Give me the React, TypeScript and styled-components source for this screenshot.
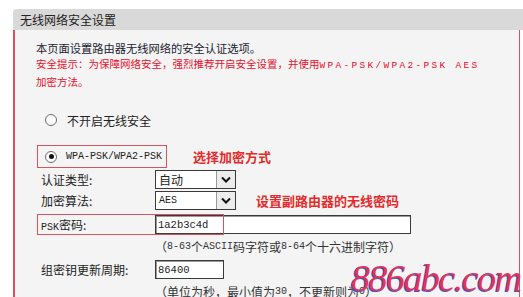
import React from "react";
import styled, { createGlobalStyle } from "styled-components";

const borderRed = "#d8535d";
const noteRed = "#e8112d";

const GlobalStyle = createGlobalStyle`
  html, body {
    margin: 0;
    padding: 0;
    background: #fff;
  }

  body {
    font-family: "Noto Sans CJK SC", "Noto Sans", sans-serif;
    font-size: 12px;
    color: #222;
    overflow: hidden;
  }
`;

const Page = styled.div`
  position: relative;
  box-sizing: border-box;
  width: 523px;
  height: 297px;
  padding: 9px 0 0 13px;
  overflow: hidden;
`;

const Panel = styled.div`
  display: flex;
  flex-direction: column;
`;

const Header = styled.div`
  display: flex;
  align-items: center;

  height: 21px;
  padding-left: 7px;

  background: #d9d9d9;
  border-top-left-radius: 4px;

  font-size: 12px;
  color: #222;
`;

const Body = styled.div`
  display: flex;
  flex-direction: column;

  height: 300px;
  margin-right: 3px;
  padding: 10px 0 0 21px;

  background: #f4f4f4;
  border-left: 2px solid ${borderRed};
  border-right: 1px solid ${borderRed};
`;

const Intro = styled.div`
  line-height: 16px;
  font-size: 11.25px;
  color: #1c1c30;
  white-space: nowrap;
`;

const Warning = styled.div`
  line-height: 16px;
  font-size: 10.5px;
  color: ${noteRed};
  white-space: nowrap;
`;

const Mono = styled.span<{ $size?: number; $spacing?: number }>`
  font-family: "Liberation Mono", monospace;
  font-size: ${(p) => p.$size ?? 10}px;
  letter-spacing: ${(p) => p.$spacing ?? 0}px;
`;

const RadioRow = styled.div`
  display: flex;
  align-items: center;
  gap: 10px;

  height: 20px;
  margin-top: 20px;
  padding-left: 9px;
`;

const Radio = styled.span<{ $checked?: boolean }>`
  position: relative;
  box-sizing: border-box;
  width: 12px;
  height: 12px;

  background: #fff;
  border: 1px solid #6a6a6a;
  border-radius: 50%;

  &::after {
    content: "";
    display: ${(p) => (p.$checked ? "block" : "none")};
    position: absolute;
    left: 2.5px;
    top: 2.5px;
    width: 5px;
    height: 5px;
    border-radius: 50%;
    background: #111;
  }
`;

const WpaRow = styled.div`
  display: flex;
  align-items: center;
  margin-top: 15px;
`;

const WpaBox = styled.div`
  display: flex;
  align-items: center;
  gap: 9px;

  box-sizing: border-box;
  height: 23px;
  margin-left: 1px;
  padding: 0 4px 0 7px;

  border: 1px solid ${borderRed};
`;

const Annotation = styled.span<{ $gap: number }>`
  margin-left: ${(p) => p.$gap}px;
  font-size: 13px;
  font-weight: 700;
  color: #e52b2b;
  white-space: nowrap;
`;

const FormRow = styled.div<{ $top: number }>`
  position: relative;
  display: flex;
  align-items: center;

  height: 21px;
  margin-top: ${(p) => p.$top}px;
  padding-left: 5px;
`;

const Label = styled.span`
  width: 114px;
  font-size: 12px;
  color: #222;
`;

const Hint = styled.div<{ $top: number }>`
  display: flex;
  align-items: center;

  height: 20px;
  margin-top: ${(p) => p.$top}px;
  padding-left: 119px;

  font-size: 12px;
  color: #333;
  white-space: nowrap;
`;

const SelectBox = styled.div`
  display: flex;
  align-items: stretch;

  box-sizing: border-box;
  width: 81px;
  height: 19px;

  background: #fff;
  border: 1px solid #3a3a3a;
`;

const SelectText = styled.span`
  flex: 1;
  display: flex;
  align-items: center;
  padding-left: 3px;
  font-size: 12px;
  color: #222;
`;

const SelectButton = styled.span`
  display: flex;
  align-items: center;
  justify-content: center;

  width: 18px;

  background: #ececec;
  border-left: 1px solid #9a9a9a;
`;

const TextInput = styled.div<{ $width: number }>`
  display: flex;
  align-items: center;

  box-sizing: border-box;
  width: ${(p) => p.$width}px;
  height: 19px;
  padding-left: 2px;

  background: #fff;
  border: 1px solid #3a3a3a;
  box-shadow: inset 1px 1px 0 #9a9a9a;
  color: #222;
`;

const Highlight = styled.div`
  position: absolute;
  left: 1px;
  top: 0;

  box-sizing: border-box;
  width: 187px;
  height: 21px;

  border: 1px solid ${borderRed};
  pointer-events: none;
`;

const Watermark = styled.div`
  position: absolute;
  left: 351px;
  top: 259px;

  font-family: "Liberation Serif", serif;
  font-style: italic;
  font-size: 38px;
  line-height: 1;
  letter-spacing: -1.5px;
  color: #e2345a;
  text-shadow: -1px 1px 0 #3f58c8;
  white-space: nowrap;
`;

const Chevron = () => (
  <svg width="10" height="7" viewBox="0 0 10 7">
    <path d="M1 1.5 L5 5.5 L9 1.5" fill="none" stroke="#111" strokeWidth="2" />
  </svg>
);

const Select: React.FC<{ children: React.ReactNode }> = ({ children }) => (
  <SelectBox>
    <SelectText>{children}</SelectText>
    <SelectButton>
      <Chevron />
    </SelectButton>
  </SelectBox>
);

export default function App() {
  return (
    <Page>
      <GlobalStyle />
      <Panel>
        <Header>无线网络安全设置</Header>
        <Body>
          <Intro>本页面设置路由器无线网络的安全认证选项。</Intro>
          <Warning>
            安全提示：为保障网络安全，强烈推荐开启安全设置，并使用
            <Mono $size={9.5} $spacing={2.3}>WPA-PSK/WPA2-PSK AES</Mono>
            <br />
            加密方法。
          </Warning>

          <RadioRow>
            <Radio />
            <span>不开启无线安全</span>
          </RadioRow>

          <WpaRow>
            <WpaBox>
              <Radio $checked />
              <Mono>WPA-PSK/WPA2-PSK</Mono>
            </WpaBox>
            <Annotation $gap={26}>选择加密方式</Annotation>
          </WpaRow>

          <FormRow $top={1}>
            <Label>认证类型:</Label>
            <Select>自动</Select>
          </FormRow>

          <FormRow $top={0}>
            <Label>加密算法:</Label>
            <Select>
              <Mono>AES</Mono>
            </Select>
            <Annotation $gap={20}>设置副路由器的无线密码</Annotation>
          </FormRow>

          <FormRow $top={3}>
            <Label>
              <Mono>PSK</Mono>密码:
            </Label>
            <TextInput $width={256}>
              <Mono $size={10.5}>1a2b3c4d</Mono>
            </TextInput>
            <Highlight />
          </FormRow>

          <Hint $top={1}>
            （<Mono>8-63</Mono>个<Mono>ASCII</Mono>码字符或<Mono>8-64</Mono>个十六进制字符）
          </Hint>

          <FormRow $top={3}>
            <Label>组密钥更新周期:</Label>
            <TextInput $width={69}>
              <Mono $size={10.5}>86400</Mono>
            </TextInput>
          </FormRow>

          <Hint $top={1}>
            （单位为秒，最小值为<Mono>30</Mono>，不更新则为<Mono>0</Mono>）
          </Hint>
        </Body>
      </Panel>
      <Watermark>886abc.com</Watermark>
    </Page>
  );
}
